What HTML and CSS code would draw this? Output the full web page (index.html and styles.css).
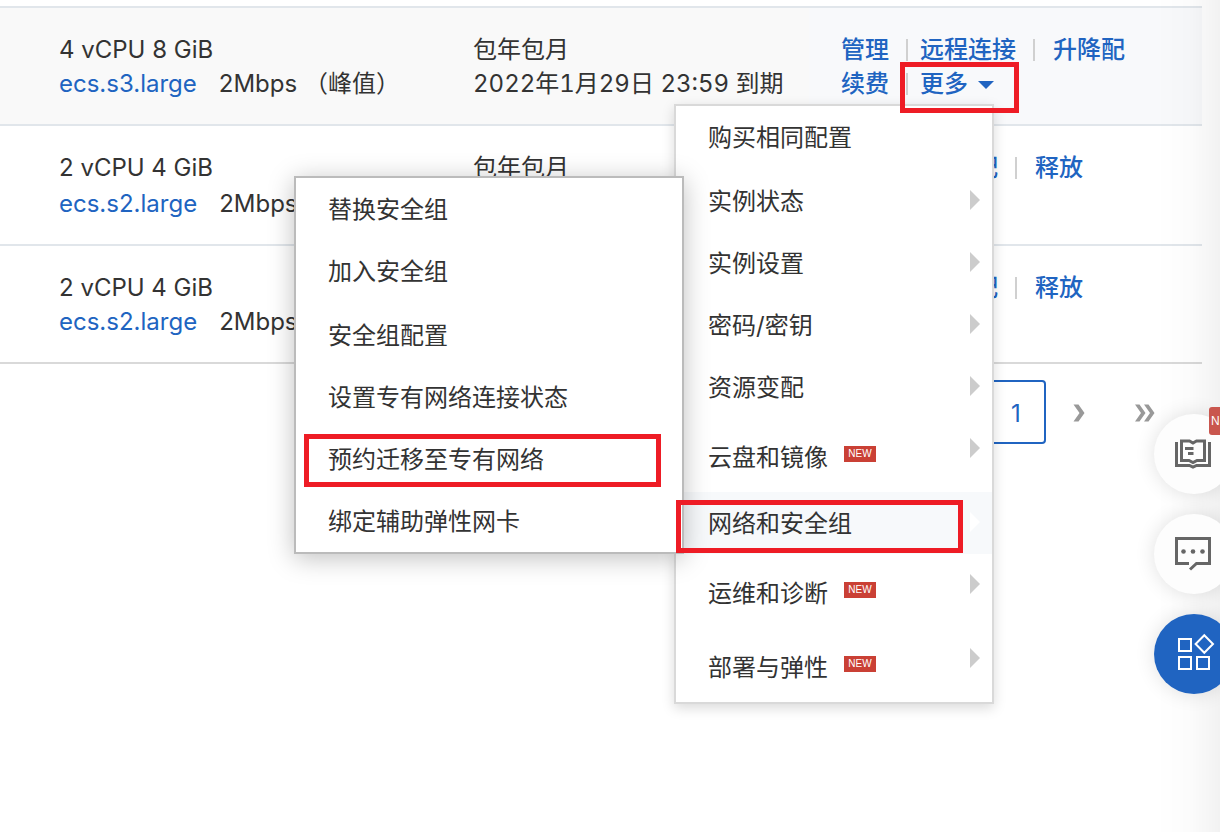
FILE: index.html
```
<!DOCTYPE html>
<html lang="zh-CN">
<head>
<meta charset="utf-8">
<meta name="viewport" content="width=device-width, initial-scale=1">
<title>实例列表</title>
<link rel="stylesheet" href="styles.css">
</head>
<body>
<main class="page">
  <table class="instances">
    <colgroup><col class="col-spec"><col class="col-billing"><col></colgroup>
    <tbody>
      <tr class="row-active">
        <td>
          <div class="line">4 vCPU 8 GiB</div>
          <div class="line spec"><a href="#">ecs.s3.large</a><span>2Mbps （峰值）</span></div>
        </td>
        <td>
          <div class="line">包年包月</div>
          <div class="line date">2022年1月29日 23:59 到期</div>
        </td>
        <td class="actions">
          <div class="line action-line"><a href="#">管理</a><i class="sep sep-tight"></i><a href="#">远程连接</a><i class="sep"></i><a href="#">升降配</a></div>
          <div class="line action-line"><a href="#">续费</a><i class="sep sep-tight"></i>
            <div class="more">
              <button class="more-button" type="button" aria-haspopup="true" aria-expanded="true">更多<svg class="caret" viewBox="0 0 16 8" aria-hidden="true"><path d="M0 0H16L8 8Z"/></svg></button>
              <ul class="menu">
                <li class="item item-tall"><button type="button">购买相同配置</button></li>
                <li class="item has-sub"><button type="button">实例状态</button></li>
                <li class="item has-sub"><button type="button">实例设置</button></li>
                <li class="item has-sub"><button type="button">密码/密钥</button></li>
                <li class="item has-sub"><button type="button">资源变配</button></li>
                <li class="item has-sub item-new"><button type="button">云盘和镜像<span class="badge">NEW</span></button></li>
                <li class="item has-sub item-hover"><button type="button">网络和安全组</button>
                  <ul class="submenu">
                    <li class="item"><button type="button">替换安全组</button></li>
                    <li class="item item-tall"><button type="button">加入安全组</button></li>
                    <li class="item"><button type="button">安全组配置</button></li>
                    <li class="item"><button type="button">设置专有网络连接状态</button></li>
                    <li class="item"><button type="button">预约迁移至专有网络</button><span class="mark mark-migrate"></span></li>
                    <li class="item"><button type="button">绑定辅助弹性网卡</button></li>
                  </ul>
                  <span class="mark mark-network"></span>
                </li>
                <li class="item has-sub item-new"><button type="button">运维和诊断<span class="badge">NEW</span></button></li>
                <li class="item has-sub item-new"><button type="button">部署与弹性<span class="badge">NEW</span></button></li>
              </ul>
              <span class="mark mark-more"></span>
            </div>
          </div>
        </td>
      </tr>
      <tr class="row-loose">
        <td>
          <div class="line">2 vCPU 4 GiB</div>
          <div class="line spec"><a href="#">ecs.s2.large</a><span>2Mbps</span></div>
        </td>
        <td>
          <div class="line">包年包月</div>
        </td>
        <td class="actions">
          <div class="line action-line"><a href="#">管理</a><i class="sep"></i><a href="#">升降配</a><i class="sep"></i><a href="#">释放</a></div>
        </td>
      </tr>
      <tr>
        <td>
          <div class="line">2 vCPU 4 GiB</div>
          <div class="line spec"><a href="#">ecs.s2.large</a><span>2Mbps</span></div>
        </td>
        <td>
          <div class="line">包年包月</div>
        </td>
        <td class="actions">
          <div class="line action-line"><a href="#">管理</a><i class="sep"></i><a href="#">升降配</a><i class="sep"></i><a href="#">释放</a></div>
        </td>
      </tr>
    </tbody>
  </table>

  <nav class="pagination" aria-label="分页">
    <button class="page-button page-current" type="button">1</button>
    <button class="page-button" type="button" aria-label="下一页"><svg width="12" height="18" viewBox="0 0 12 18"><path d="M0.500 0.500H5.500L11.500 9L5.500 17.500H0.500L6.500 9Z"/></svg></button>
    <button class="page-button" type="button" aria-label="末页"><svg width="20" height="18" viewBox="0 0 20 18"><path d="M0 0.500H4.500L10.500 9L4.500 17.500H0L6 9Z"/><path d="M9 0.500H13.500L19.500 9L13.500 17.500H9L15 9Z"/></svg></button>
  </nav>
</main>

<div class="edge-shade"></div>
<aside class="dock">
  <button class="dock-button" type="button" aria-label="文档">
    <svg width="36" height="30" viewBox="0 0 36 30"><path d="M1.500 3V26.500H14.500L18 28.200L21.500 26.500H34.500V3"/><path d="M6.500 2H14.500L18 4L21.500 2H29.500V21.500H22L18 23.500L14 21.500H6.500Z"/><path d="M10 9.500H18.500M13 14.500H18.500"/></svg>
    <span class="dock-tag">N</span>
  </button>
  <button class="dock-button" type="button" aria-label="咨询">
    <svg width="36" height="34" viewBox="0 0 36 34"><path d="M14 26.500H1.500V1.500H34.500V26.500H21.500L15 32.500"/><g class="dots"><circle cx="8.500" cy="14.500" r="2.300"/><circle cx="18" cy="14.500" r="2.300"/><circle cx="27.500" cy="14.500" r="2.300"/></g></svg>
  </button>
  <button class="dock-button dock-primary" type="button" aria-label="应用">
    <svg width="36" height="36" viewBox="0 0 36 36"><path d="M3 3H15V15H3ZM3 21H15V33H3ZM21 21H33V33H21ZM28.300 -0.800L37 8L28.300 16.800L19.600 8Z"/></svg>
  </button>
</aside>
</body>
</html>
```
FILE: styles.css
```
* {
  box-sizing: border-box;
}

body {
  min-height: 100vh;
  margin: 0;
  background: #fff;
  color: #333;
  font-family: Inter, "Noto Sans CJK SC", sans-serif;
  font-size: 24px;
}

button {
  margin: 0;
  padding: 0;
  border: 0;
  background: none;
  color: inherit;
  font: inherit;
  cursor: pointer;
}

a {
  color: #2064c1;
  text-decoration: none;
}

ul {
  margin: 0;
  padding: 0;
  list-style: none;
}

.page {
  min-height: 100vh;
  padding: 6px 18px 0 0;
}

/* Instance table */
.instances {
  width: 100%;
  table-layout: fixed;
  border-spacing: 0;
  border-top: 2px solid #e1e6eb;
}

.col-spec {
  width: 441px;
}

.col-billing {
  width: 368px;
}

.instances td {
  padding: 25px 0 23px 32px;
  border-bottom: 2px solid #e1e6eb;
  vertical-align: top;
  white-space: nowrap;
}

.instances td:first-child {
  padding-left: 59px;
}

.instances tr:last-child td {
  border-bottom-color: #d9d9d9;
}

.row-active td {
  background: #f9f9f9;
}

.row-active .actions {
  background: #f8f9fb;
}

.line {
  height: 34px;
  line-height: 34px;
}

.row-loose .line + .line {
  margin-top: 2px;
}

.date {
  font-variant-numeric: tabular-nums;
}

.spec {
  display: flex;
  gap: 22px;
}

.action-line {
  display: flex;
  align-items: center;
  font-weight: 500;
}

.sep {
  width: 2px;
  height: 22px;
  margin: 0 18px 0 17px;
  background: #d0d0d0;
}

.sep-tight {
  margin-right: 12px;
}

.more {
  position: relative;
}

.more-button {
  display: flex;
  align-items: center;
  gap: 10px;
  height: 34px;
  color: #2064c1;
}

.caret {
  width: 16px;
  height: 8px;
  margin-top: 2px;
  fill: #2064c1;
}

/* Drop-down menus */
.menu,
.submenu {
  position: absolute;
  border: 2px solid #d9d9d9;
  background: #fff;
  color: #333;
  font-weight: 400;
}

.menu {
  top: 37px;
  right: 0;
  z-index: 2;
  width: 320px;
  box-shadow: 0 4px 12px rgba(0, 0, 0, 0.15);
}

.submenu {
  right: calc(100% - 8px);
  bottom: 0;
  z-index: 1;
  width: 390px;
  border-color: #bbb;
  box-shadow: 0 4px 24px rgba(0, 0, 0, 0.25);
}

.item {
  position: relative;
  height: 62px;
}

.item > button {
  display: flex;
  align-items: center;
  gap: 16px;
  width: 100%;
  height: 62px;
  padding: 2px 0 0 32px;
  text-align: left;
}

.item-tall {
  height: 64px;
}

.item-new {
  height: 74px;
}

.item-new > button {
  height: 78px;
}

.item-hover {
  background: #f7f9fb;
}

.has-sub::after {
  content: "";
  position: absolute;
  top: 20px;
  right: 12px;
  border: solid transparent;
  border-width: 10px 0 10px 10px;
  border-left-color: #ccc;
}

.item-hover::after {
  border-left-color: #fff;
}

.badge {
  width: 32px;
  height: 16px;
  margin-bottom: 8px;
  background: #ca4035;
  color: #fff;
  font: 10px/16px "Liberation Sans", sans-serif;
  text-align: center;
}

/* Highlight frames */
.mark {
  position: absolute;
  z-index: 3;
  border: 5px solid #ee1c25;
  pointer-events: none;
}

.mark-more {
  top: -5px;
  right: -25px;
  width: 119px;
  height: 51px;
}

.mark-network {
  top: 8px;
  left: 0;
  width: 287px;
  height: 53px;
}

.mark-migrate {
  top: 6px;
  left: 8px;
  width: 357px;
  height: 53px;
}

/* Pagination */
.pagination {
  display: flex;
  justify-content: flex-end;
  padding: 16px 24px 0 0;
}

.page-button {
  display: flex;
  align-items: center;
  justify-content: center;
  width: 66px;
  height: 64px;
  padding-top: 2px;
  fill: #999;
}

.page-current {
  width: 60px;
  border: 2px solid #2064c1;
  border-radius: 4px;
  color: #2064c1;
}

/* Floating dock */
.edge-shade {
  position: fixed;
  top: 0;
  right: 0;
  bottom: 0;
  width: 64px;
  background: linear-gradient(to right, rgba(0, 0, 0, 0), rgba(0, 0, 0, 0.01) 50%, rgba(0, 0, 0, 0.05));
  pointer-events: none;
}

.dock {
  position: fixed;
  top: 414px;
  right: -14px;
  display: flex;
  flex-direction: column;
  gap: 20px;
}

.dock-button {
  position: relative;
  display: flex;
  align-items: center;
  justify-content: center;
  width: 80px;
  height: 80px;
  padding-right: 2px;
  border-radius: 50%;
  background: #fdfdfd;
  box-shadow: 0 0 20px rgba(0, 0, 0, 0.12);
}

.dock-button svg {
  overflow: visible;
  fill: none;
  stroke: #666;
  stroke-width: 3;
}

.dock-button .dots {
  fill: #666;
  stroke: none;
}

.dock-primary {
  padding: 0;
  background: #2064c1;
}

.dock-primary svg {
  stroke: #fff;
  stroke-width: 2;
}

.dock-tag {
  position: absolute;
  top: -7px;
  left: 55px;
  width: 25px;
  padding-left: 2px;
  border-radius: 3px;
  background: #c9564e;
  color: #fff;
  font: 12px/28px "Liberation Sans", sans-serif;
  text-align: left;
}
```
